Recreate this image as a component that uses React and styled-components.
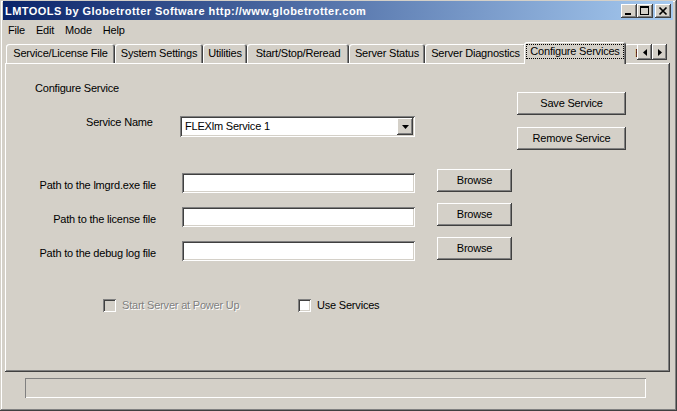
import React from 'react';
import styled, { createGlobalStyle, css } from 'styled-components';

const GlobalStyle = createGlobalStyle`
  html, body {
    margin: 0;
    padding: 0;
    background: #d4d0c8;
  }
  body {
    font-family: "Liberation Sans", Arial, sans-serif;
    font-size: 11px;
    letter-spacing: -0.2px;
    color: #000;
  }
  * {
    box-sizing: border-box;
  }
`;

const raised = css`
  background: #d4d0c8;
  box-shadow: inset -1px -1px #404040, inset 1px 1px #ffffff,
    inset -2px -2px #808080, inset 2px 2px #d4d0c8;
`;

const sunken = css`
  box-shadow: inset 1px 1px #808080, inset -1px -1px #ffffff,
    inset 2px 2px #404040, inset -2px -2px #d4d0c8;
`;

const Window = styled.div`
  width: 677px;
  height: 411px;
  padding: 1px 4px 3px 3px;
  display: flex;
  flex-direction: column;
  background: #d4d0c8;
  box-shadow: inset -1px -1px #404040, inset 1px 1px #d4d0c8,
    inset -2px -2px #808080, inset 2px 2px #ffffff;
  overflow: hidden;
`;

const TitleBar = styled.div`
  height: 19px;
  display: flex;
  align-items: center;
  padding: 0 2px;
  background: linear-gradient(to right, #0a246a, #a6caf0);
`;

const Title = styled.div`
  flex: 1;
  color: #fff;
  font-weight: bold;
  font-size: 11px;
  letter-spacing: 0.45px;
  white-space: nowrap;
`;

const CaptionButtons = styled.div`
  display: flex;
  align-items: center;
`;

const CaptionButton = styled.div`
  ${raised};
  width: 16px;
  height: 14px;
  margin-left: ${(p) => (p.$gap ? '2px' : '0')};
  display: flex;
  align-items: center;
  justify-content: center;
  svg {
    display: block;
  }
`;

const MenuBar = styled.div`
  height: 20px;
  display: flex;
  align-items: center;
`;

const MenuItem = styled.div`
  padding: 0 6px 0 5px;
  line-height: 13px;
`;

const TabArea = styled.div`
  margin: 0 3px 0 2px;
  display: flex;
  flex-direction: column;
`;

const TabStrip = styled.div`
  height: 23px;
  display: flex;
  position: relative;
  z-index: 1;
`;

const TabList = styled.div`
  width: 632px;
  height: 24px;
  margin-bottom: -1px;
  padding-left: 1px;
  display: flex;
  align-items: flex-end;
  overflow: hidden;
`;

const Tab = styled.div`
  flex: 0 0 auto;
  width: ${(p) => p.$w}px;
  height: 19px;
  margin-bottom: 1px;
  padding-top: 3px;
  text-align: center;
  white-space: nowrap;
  line-height: 13px;
  background: #d4d0c8;
  border-radius: 3px 3px 0 0;
  box-shadow: inset 1px 1px #ffffff, inset -1px 0 #404040, inset -2px 0 #808080;
  overflow: hidden;

  ${(p) =>
    p.$active &&
    css`
      position: relative;
      z-index: 2;
      width: ${p.$w + 4}px;
      height: 22px;
      margin: 0 -2px 0;
      padding-top: 2px;
    `}
`;

const FocusText = styled.span`
  display: inline-block;
  border: 1px dotted #000;
  padding: 0 3px;
  line-height: 13px;
`;

const ScrollButtons = styled.div`
  display: flex;
  margin-top: 4px;
  height: 16px;
`;

const ScrollButton = styled.div`
  ${raised};
  width: 15px;
  height: 16px;
  display: flex;
  align-items: center;
  justify-content: center;
`;

const Panel = styled.div`
  height: 309px;
  padding: 2px;
  background: #d4d0c8;
  box-shadow: inset -1px -1px #404040, inset 1px 1px #ffffff,
    inset -2px -2px #808080;
`;

const TopSection = styled.div`
  display: flex;
  align-items: flex-start;
`;

const LeftCol = styled.div`
  width: 510px;
`;

const RightCol = styled.div`
  padding-top: 27px;
  display: flex;
  flex-direction: column;
  gap: 12px;
`;

const Heading = styled.div`
  margin: 17px 0 0 28px;
  line-height: 13px;
`;

const ServiceRow = styled.div`
  margin-top: 21px;
  display: flex;
  align-items: flex-start;
`;

const Label = styled.div`
  width: ${(p) => p.$w}px;
  margin-left: ${(p) => p.$ml || 0}px;
  margin-top: ${(p) => p.$mt || 0}px;
  text-align: ${(p) => p.$align || 'left'};
  line-height: 13px;
  white-space: nowrap;
`;

const Select = styled.div`
  ${sunken};
  width: 235px;
  height: 21px;
  background: #fff;
  padding: 2px 2px 2px 5px;
  display: flex;
  align-items: center;
  justify-content: space-between;
  line-height: 13px;
`;

const SelectButton = styled.div`
  ${raised};
  width: 16px;
  height: 17px;
  display: flex;
  align-items: center;
  justify-content: center;
`;

const Button = styled.div`
  ${raised};
  width: ${(p) => p.$w}px;
  height: 23px;
  margin-left: ${(p) => p.$ml || 0}px;
  display: flex;
  align-items: center;
  justify-content: center;
  line-height: 13px;
  white-space: nowrap;
`;

const PathRows = styled.div`
  margin-top: 19px;
  display: flex;
  flex-direction: column;
  gap: 11px;
`;

const PathRow = styled.div`
  height: 23px;
  display: flex;
  align-items: flex-start;
`;

const TextField = styled.div`
  ${sunken};
  width: 233px;
  height: 20px;
  margin: 4px 0 0 26px;
  background: #fff;
`;

const CheckRow = styled.div`
  margin-top: 39px;
  padding-left: 96px;
  display: flex;
  align-items: center;
`;

const CheckItem = styled.div`
  width: ${(p) => (p.$w ? `${p.$w}px` : 'auto')};
  display: flex;
  align-items: center;
  gap: 6px;
  color: ${(p) => (p.$disabled ? '#808080' : '#000')};
  text-shadow: ${(p) => (p.$disabled ? '1px 1px 0 #ffffff' : 'none')};
  line-height: 13px;
`;

const CheckBox = styled.div`
  ${sunken};
  width: 13px;
  height: 13px;
  background: ${(p) => (p.$disabled ? '#d4d0c8' : '#ffffff')};
`;

const StatusArea = styled.div`
  flex: 1;
  padding: 6px 0 0 22px;
`;

const StatusField = styled.div`
  width: 621px;
  height: 20px;
  box-shadow: inset 1px 1px #808080, inset -1px -1px #ffffff;
`;

const tabs = [
  { label: 'Service/License File', w: 109 },
  { label: 'System Settings', w: 88 },
  { label: 'Utilities', w: 44 },
  { label: 'Start/Stop/Reread', w: 102 },
  { label: 'Server Status', w: 76 },
  { label: 'Server Diagnostics', w: 101 },
  { label: 'Configure Services', w: 98, active: true },
  { label: 'Borrowing', w: 70 },
];

const paths = [
  'Path to the lmgrd.exe file',
  'Path to the license file',
  'Path to the debug log file',
];

function Arrow({ dir }) {
  const pts = {
    down: '0,0 7,0 3.5,4',
    left: '4,0 4,7 0,3.5',
    right: '0,0 0,7 4,3.5',
  }[dir];
  const w = dir === 'down' ? 7 : 4;
  const h = dir === 'down' ? 4 : 7;
  return (
    <svg width={w} height={h} viewBox={`0 0 ${w} ${h}`}>
      <polygon points={pts} fill="#000" />
    </svg>
  );
}

function App() {
  return (
    <>
      <GlobalStyle />
      <Window>
        <TitleBar>
          <Title>LMTOOLS by Globetrotter Software http://www.globetrotter.com</Title>
          <CaptionButtons>
            <CaptionButton>
              <svg width="12" height="10" viewBox="0 0 12 10" shapeRendering="crispEdges">
                <rect x="2" y="7" width="6" height="2" fill="#000" />
              </svg>
            </CaptionButton>
            <CaptionButton>
              <svg width="12" height="10" viewBox="0 0 12 10" shapeRendering="crispEdges">
                <rect x="1.5" y="0.5" width="8" height="8" fill="none" stroke="#000" />
                <rect x="1" y="1" width="9" height="1" fill="#000" />
              </svg>
            </CaptionButton>
            <CaptionButton $gap>
              <svg width="12" height="10" viewBox="0 0 12 10">
                <path d="M2.5 1.5 L9.5 8.5 M9.5 1.5 L2.5 8.5" stroke="#000" strokeWidth="1.7" />
              </svg>
            </CaptionButton>
          </CaptionButtons>
        </TitleBar>

        <MenuBar>
          <MenuItem>File</MenuItem>
          <MenuItem>Edit</MenuItem>
          <MenuItem>Mode</MenuItem>
          <MenuItem>Help</MenuItem>
        </MenuBar>

        <TabArea>
          <TabStrip>
            <TabList>
              {tabs.map((t) => (
                <Tab key={t.label} $w={t.w} $active={t.active}>
                  {t.active ? <FocusText>{t.label}</FocusText> : t.label}
                </Tab>
              ))}
            </TabList>
            <ScrollButtons>
              <ScrollButton><Arrow dir="left" /></ScrollButton>
              <ScrollButton><Arrow dir="right" /></ScrollButton>
            </ScrollButtons>
          </TabStrip>

          <Panel>
            <TopSection>
              <LeftCol>
                <Heading>Configure Service</Heading>
                <ServiceRow>
                  <Label $w={94} $ml={79}>Service Name</Label>
                  <Select>
                    <span>FLEXlm Service 1</span>
                    <SelectButton><Arrow dir="down" /></SelectButton>
                  </Select>
                </ServiceRow>
              </LeftCol>
              <RightCol>
                <Button $w={109}>Save Service</Button>
                <Button $w={109}>Remove Service</Button>
              </RightCol>
            </TopSection>

            <PathRows>
              {paths.map((p) => (
                <PathRow key={p}>
                  <Label $w={149} $mt={10} $align="right">{p}</Label>
                  <TextField />
                  <Button $w={75} $ml={22}>Browse</Button>
                </PathRow>
              ))}
            </PathRows>

            <CheckRow>
              <CheckItem $w={195} $disabled>
                <CheckBox $disabled />
                Start Server at Power Up
              </CheckItem>
              <CheckItem>
                <CheckBox />
                Use Services
              </CheckItem>
            </CheckRow>
          </Panel>
        </TabArea>

        <StatusArea>
          <StatusField />
        </StatusArea>
      </Window>
    </>
  );
}

export default App;
